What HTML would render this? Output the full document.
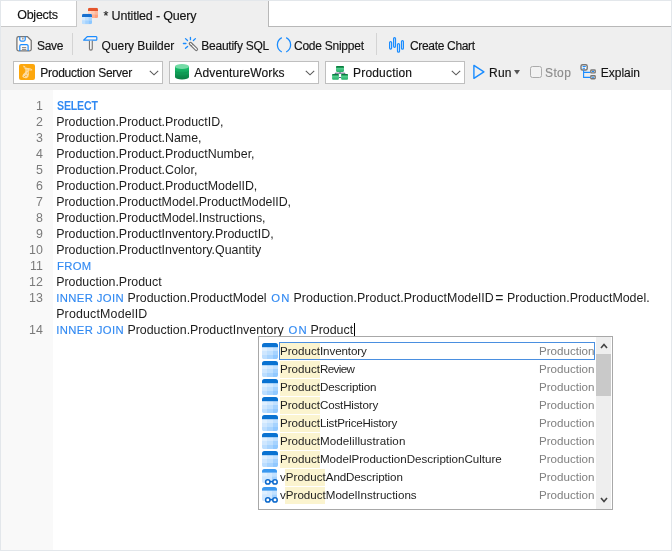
<!DOCTYPE html>
<html><head><meta charset="utf-8">
<style>
*{margin:0;padding:0;box-sizing:border-box}
html,body{width:672px;height:551px;overflow:hidden;background:#efefef;font-family:"Liberation Sans",sans-serif;color:#1e1e1e}
#root{position:absolute;left:0;top:0;width:672px;height:551px;will-change:transform;background:#efefef}
.a{position:absolute}
.tb{position:absolute;font-size:12px;letter-spacing:-0.25px;white-space:nowrap;line-height:14px;color:#141414;-webkit-text-stroke:0.15px currentColor}
.dd{position:absolute;top:61px;height:23px;background:#fff;border:1px solid #bfbfbf}
.chev{position:absolute;top:7.5px;width:10px;height:6px}
.code{position:absolute;font-size:12.4px;white-space:nowrap;line-height:16px;color:#1e1e1e}
.kw{color:#3089f2;font-size:11.3px;letter-spacing:0.25px;-webkit-text-stroke:0.12px #3089f2}
.kwb{font-weight:bold;font-size:12.3px;letter-spacing:-0.2px;-webkit-text-stroke:0;transform:scaleX(0.86);transform-origin:0 0}
.ln{position:absolute;font-size:12.4px;line-height:16px;color:#7a7a7a;text-align:right;width:30px;left:12.8px}
.pi{position:absolute;left:280px;font-size:11.6px;line-height:16px;white-space:nowrap;color:#1e1e1e}
.hl{background:#fbf4cf}
.ps{position:absolute;left:539px;font-size:11.6px;line-height:16px;color:#808080}
</style></head><body>
<div id="root">
<div class="a" style="left:0;top:0;width:672px;height:551px;border:1px solid #e3e7eb;z-index:50"></div>
<div class="a" style="left:1px;top:1px;width:76px;height:26px;background:#fff;border-right:1px solid #c8c8c8;border-bottom:1px solid #c8c8c8"></div>
<div class="tb" style="left:17.2px;top:8px;font-size:12.5px">Objects</div>
<svg class="a" style="left:80px;top:4px" width="24" height="24" viewBox="0 0 24 24">
<defs><clipPath id="oc"><rect x="8" y="3.8" width="10" height="10.2" rx="1.6"/></clipPath><clipPath id="bc"><rect x="2" y="9.8" width="10" height="10.4" rx="1.6"/></clipPath></defs>
<g clip-path="url(#oc)">
<rect x="8" y="3.8" width="10" height="10.2" fill="#ffc7b0"/>
<rect x="8" y="7" width="3.3" height="3.5" fill="#ffd9c8"/><rect x="11.3" y="7" width="3.4" height="3.5" fill="#ffcab4"/><rect x="14.7" y="7" width="3.3" height="3.5" fill="#ffb89a"/>
<rect x="8" y="10.5" width="3.3" height="3.5" fill="#ffc4ab"/><rect x="11.3" y="10.5" width="3.4" height="3.5" fill="#ffb092"/><rect x="14.7" y="10.5" width="3.3" height="3.5" fill="#ff9f7c"/>
<rect x="8" y="3.8" width="10" height="3.2" fill="#e4552c"/>
</g>
<g clip-path="url(#bc)">
<rect x="2" y="9.8" width="10" height="10.4" fill="#b8dcff"/>
<rect x="2" y="13" width="3.3" height="3.6" fill="#d6ecff"/><rect x="5.3" y="13" width="3.4" height="3.6" fill="#c2e2ff"/><rect x="8.7" y="13" width="3.3" height="3.6" fill="#a9d5ff"/>
<rect x="2" y="16.6" width="3.3" height="3.6" fill="#bcdfff"/><rect x="5.3" y="16.6" width="3.4" height="3.6" fill="#a3d2ff"/><rect x="8.7" y="16.6" width="3.3" height="3.6" fill="#8cc7ff"/>
<rect x="2" y="9.8" width="10" height="3.2" fill="#1670d0"/>
</g>
</svg>
<div class="tb" style="left:103.6px;top:9px;font-size:12.5px;letter-spacing:-0.17px">* Untitled - Query</div>
<div class="a" style="left:268px;top:1px;width:403px;height:26px;background:#fff;border-left:1px solid #b8b8b8;border-bottom:1px solid #b8b8b8"></div>
<svg class="a" style="left:16px;top:36px" width="16" height="16" viewBox="0 0 16 16">
<path d="M0.9 2.4 a1.8 1.8 0 0 1 1.8 -1.8 H11.4 L15.25 4.5 V13.1 a1.8 1.8 0 0 1 -1.8 1.8 H2.7 a1.8 1.8 0 0 1 -1.8 -1.8 Z" fill="#fffaf6" stroke="#777777" stroke-width="1.3"/>
<path d="M3.8 0.6 V3.6 a1.5 1.5 0 0 0 1.5 1.5 H7.7 a1.5 1.5 0 0 0 1.5 -1.5 V0.6" fill="none" stroke="#1a8cff" stroke-width="1.2"/>
<path d="M6.9 1.8 V3.5" stroke="#777777" stroke-width="1.1"/>
<path d="M3.8 15 V10.1 a1.5 1.5 0 0 1 1.5 -1.5 H10.6 a1.5 1.5 0 0 1 1.5 1.5 V15" fill="none" stroke="#1a8cff" stroke-width="1.2"/>
<path d="M6 11.6 H10.2 M6 13.4 H10.2" stroke="#777777" stroke-width="0.9"/>
</svg>
<div class="tb" style="left:36.9px;top:38.6px">Save</div>
<div class="a" style="left:72px;top:33px;width:1px;height:22px;background:#d4d4d4"></div>
<svg class="a" style="left:82px;top:36px" width="16" height="16" viewBox="0 0 16 16">
<path d="M1.6 4.1 L5.2 0.7 H14.2 a0.6 0.6 0 0 1 0.6 0.6 V3.5 a0.6 0.6 0 0 1 -0.6 0.6 Z" fill="#fff6f0" stroke="#1a8cff" stroke-width="1.2" stroke-linejoin="round"/>
<path d="M7.5 4.7 V12.8 a1.37 1.37 0 0 0 2.75 0 V4.7" fill="#fff" stroke="#777777" stroke-width="1.2"/>
</svg>
<div class="tb" style="left:101.6px;top:38.6px;letter-spacing:-0.05px">Query Builder</div>
<svg class="a" style="left:180px;top:32px" width="24" height="24" viewBox="0 0 24 24">
<path d="M10.45 5.3 V7.7 M5.5 6.6 L7.5 8.5 M15.4 6.6 L13.4 8.5 M3.4 11.5 H5.9 M5.5 16.3 L7.6 14.4" stroke="#1a8cff" stroke-width="1.3" stroke-linecap="round"/>
<path d="M10.5 11.6 L16.3 17.3" stroke="#777777" stroke-width="3.6" stroke-linecap="round"/>
<path d="M10.5 11.6 L16.3 17.3" stroke="#fff" stroke-width="1.2" stroke-linecap="round"/>
<path d="M11.2 14 L13 12.2" stroke="#777777" stroke-width="1"/>
</svg>
<div class="tb" style="left:201.3px;top:38.6px">Beautify SQL</div>
<svg class="a" style="left:272px;top:32px" width="24" height="24" viewBox="0 0 24 24">
<path d="M9.8 5.7 A8 8 0 0 0 9.8 20" fill="none" stroke="#1a8cff" stroke-width="1.3"/>
<path d="M14.2 5.7 A8 8 0 0 1 14.2 20" fill="none" stroke="#1a8cff" stroke-width="1.3"/>
</svg>
<div class="tb" style="left:294px;top:38.6px">Code Snippet</div>
<div class="a" style="left:376px;top:33px;width:1px;height:22px;background:#d4d4d4"></div>
<svg class="a" style="left:384px;top:32px" width="24" height="24" viewBox="0 0 24 24">
<g fill="none" stroke="#1a8cff" stroke-width="1.2">
<rect x="5.6" y="9.6" width="2" height="7.5" rx="1"/>
<rect x="9.6" y="5.6" width="1.9" height="9.7" rx="0.95"/>
<rect x="13.5" y="11.6" width="2" height="8.6" rx="1"/>
<rect x="17.5" y="8.6" width="1.9" height="8.5" rx="0.95"/>
</g></svg>
<div class="tb" style="left:410px;top:38.6px;letter-spacing:-0.33px">Create Chart</div>
<div class="dd" style="left:13px;width:150px"><svg class="chev" style="left:135px" viewBox="0 0 10 6"><path d="M0.8 0.8 L5 4.8 L9.2 0.8" fill="none" stroke="#5a5a5a" stroke-width="1.1"/></svg></div>
<svg class="a" style="left:19px;top:64px" width="16" height="16" viewBox="0 0 16 16">
<rect x="0" y="0" width="16" height="16" rx="2" fill="#fda70c"/>
<g fill="#fde4bb" opacity="0.85">
<path d="M4 1.8 Q5.5 1.5 6.8 3.2 Q7.5 4.2 9 4 Q12 3.8 13.6 6 Q12.5 6.8 10 6.4 Q9.4 8 10 10 Q10 13 7.5 14.2 Q4.5 14.5 3.2 12.6 Q3.5 10.2 6 8.6 Q6.6 7 6.4 5.4 Q4.6 3.8 4 1.8 Z"/>
</g>
<g fill="#fda70c">
<circle cx="7" cy="11.5" r="0.7"/><circle cx="5.5" cy="12.5" r="0.6"/><circle cx="8.5" cy="9" r="0.6"/><circle cx="8" cy="6" r="0.5"/><circle cx="11" cy="5.2" r="0.5"/><circle cx="6" cy="3.5" r="0.5"/>
</g></svg>
<div class="tb" style="left:40.3px;top:66px;letter-spacing:-0.26px">Production Server</div>
<div class="dd" style="left:169px;width:150px"><svg class="chev" style="left:135px" viewBox="0 0 10 6"><path d="M0.8 0.8 L5 4.8 L9.2 0.8" fill="none" stroke="#5a5a5a" stroke-width="1.1"/></svg></div>
<svg class="a" style="left:175px;top:64px" width="14" height="16" viewBox="0 0 14 16">
<defs><linearGradient id="dbg" x1="0" y1="0" x2="0" y2="1"><stop offset="0" stop-color="#19c46e"/><stop offset="1" stop-color="#0a7a40"/></linearGradient></defs>
<path d="M0 2.6 V13 a7 2.6 0 0 0 14 0 V2.6z" fill="url(#dbg)"/>
<path d="M0 6.6 a7 2.4 0 0 0 14 0 M0 10 a7 2.4 0 0 0 14 0" fill="none" stroke="#0c8a4a" stroke-width="0.6" opacity="0.7"/>
<ellipse cx="7" cy="2.6" rx="7" ry="2.5" fill="#74dba6"/>
</svg>
<div class="tb" style="left:194.3px;top:66px;letter-spacing:0.14px">AdventureWorks</div>
<div class="dd" style="left:325px;width:140px"><svg class="chev" style="left:125px" viewBox="0 0 10 6"><path d="M0.8 0.8 L5 4.8 L9.2 0.8" fill="none" stroke="#5a5a5a" stroke-width="1.1"/></svg></div>
<svg class="a" style="left:332px;top:66px" width="16" height="14" viewBox="0 0 16 14">
<defs><linearGradient id="sg" x1="0" y1="0" x2="0" y2="1"><stop offset="0" stop-color="#6fe0a8"/><stop offset="1" stop-color="#26b068"/></linearGradient></defs>
<path d="M8 5.6 V7.2 M3.2 7.2 H12.8 M3.2 7.2 V8 M12.8 7.2 V8 M6.8 11.5 H9.2" stroke="#3d4b6b" stroke-width="0.9" fill="none"/>
<rect x="4" y="0.1" width="8" height="5.8" rx="1.1" fill="url(#sg)"/>
<path d="M4 1.8 V1.2 a1.1 1.1 0 0 1 1.1 -1.1 h5.8 a1.1 1.1 0 0 1 1.1 1.1 V1.8z" fill="#0a7d3e"/>
<rect x="0.1" y="7.9" width="6.8" height="5.9" rx="1.1" fill="url(#sg)"/>
<path d="M0.1 9.6 V9 a1.1 1.1 0 0 1 1.1 -1.1 h4.6 a1.1 1.1 0 0 1 1.1 1.1 V9.6z" fill="#0a7d3e"/>
<rect x="9.1" y="7.9" width="6.9" height="5.9" rx="1.1" fill="url(#sg)"/>
<path d="M9.1 9.6 V9 a1.1 1.1 0 0 1 1.1 -1.1 h4.7 a1.1 1.1 0 0 1 1.1 1.1 V9.6z" fill="#0a7d3e"/>
</svg>
<div class="tb" style="left:353.1px;top:66px;letter-spacing:0.17px">Production</div>
<svg class="a" style="left:468px;top:60px" width="24" height="24" viewBox="0 0 24 24"><path d="M5.9 5.4 L15.9 11.8 L5.9 18.3 Z" fill="none" stroke="#1a8cff" stroke-width="1.4" stroke-linejoin="round"/></svg>
<div class="tb" style="left:489.1px;top:66px;letter-spacing:0.2px">Run</div>
<svg class="a" style="left:514px;top:70px" width="6" height="5" viewBox="0 0 6 5"><path d="M0 0 H6 L3 4.5z" fill="#555"/></svg>
<div class="a" style="left:530px;top:66px;width:12px;height:12px;border:1.3px solid #ababab;border-radius:2.5px;background:#f2f2f2"></div>
<div class="tb" style="left:545px;top:66px;color:#8c8c8c;letter-spacing:0.38px">Stop</div>
<svg class="a" style="left:576px;top:60px" width="24" height="24" viewBox="0 0 24 24">
<g fill="#fffaf6" stroke="#777777" stroke-width="1.4">
<rect x="5" y="4.7" width="6.2" height="5.3" rx="1.5"/>
<rect x="14.8" y="10" width="4.4" height="2.9" rx="0.7"/>
<rect x="14.8" y="15.8" width="4.4" height="3" rx="0.7"/>
</g>
<path d="M6.6 6.5 H9.8 M6.6 8.3 H9" stroke="#1a8cff" stroke-width="1"/>
<path d="M16 11.5 H18 M16 17.3 H18" stroke="#1a8cff" stroke-width="1"/>
<path d="M7.6 10.2 V17.4 H14.2 M7.6 12.4 H14.2" fill="none" stroke="#1a8cff" stroke-width="1.1"/>
</svg>
<div class="tb" style="left:600.8px;top:66px;letter-spacing:-0.02px">Explain</div>
<div class="a" style="left:1px;top:90px;width:670px;height:460px;background:#fff"></div>
<div class="a" style="left:1px;top:90px;width:52px;height:460px;background:#f9f9f9"></div>
<div class="ln" style="top:98px">1</div>
<div class="ln" style="top:114px">2</div>
<div class="ln" style="top:130px">3</div>
<div class="ln" style="top:146px">4</div>
<div class="ln" style="top:162px">5</div>
<div class="ln" style="top:178px">6</div>
<div class="ln" style="top:194px">7</div>
<div class="ln" style="top:210px">8</div>
<div class="ln" style="top:226px">9</div>
<div class="ln" style="top:242px">10</div>
<div class="ln" style="top:258px">11</div>
<div class="ln" style="top:274px">12</div>
<div class="ln" style="top:290px">13</div>
<div class="ln" style="top:322px">14</div>
<div class="code kw kwb" style="left:56.6px;top:98px;">SELECT</div>
<div class="code" style="left:56.2px;top:114px;">Production.Product.ProductID,</div>
<div class="code" style="left:56.2px;top:130px;">Production.Product.Name,</div>
<div class="code" style="left:56.2px;top:146px;">Production.Product.ProductNumber,</div>
<div class="code" style="left:56.2px;top:162px;">Production.Product.Color,</div>
<div class="code" style="left:56.2px;top:178px;">Production.Product.ProductModelID,</div>
<div class="code" style="left:56.2px;top:194px;">Production.ProductModel.ProductModelID,</div>
<div class="code" style="left:56.2px;top:210px;">Production.ProductModel.Instructions,</div>
<div class="code" style="left:56.2px;top:226px;">Production.ProductInventory.ProductID,</div>
<div class="code" style="left:56.2px;top:242px;">Production.ProductInventory.Quantity</div>
<div class="code kw" style="left:57px;top:258px;letter-spacing:0.3px">FROM</div>
<div class="code" style="left:56.2px;top:274px;">Production.Product</div>
<div class="code kw" style="left:56.2px;top:290px;letter-spacing:0.38px">INNER JOIN</div>
<div class="code" style="left:127.4px;top:290px;">Production.ProductModel</div>
<div class="code kw" style="left:271.2px;top:290px;letter-spacing:1.2px">ON</div>
<div class="code" style="left:293.4px;top:290px;letter-spacing:0.08px">Production.Product.ProductModelID</div>
<div class="code" style="left:495.2px;top:289.5px;font-size:14px">=</div>
<div class="code" style="left:507px;top:290px;">Production.ProductModel.</div>
<div class="code" style="left:56.2px;top:306px;letter-spacing:0.17px">ProductModelID</div>
<div class="code kw" style="left:56.2px;top:322px;letter-spacing:0.38px">INNER JOIN</div>
<div class="code" style="left:127.4px;top:322px;">Production.ProductInventory</div>
<div class="code kw" style="left:288.4px;top:322px;letter-spacing:1.2px">ON</div>
<div class="code" style="left:310.4px;top:322px;">Product</div>
<div class="a" style="left:354px;top:323px;width:1px;height:13px;background:#000"></div>
<div class="a" style="left:258px;top:336px;width:355px;height:174px;background:#fff;border:1px solid #a8a8a8"></div>
<div class="a" style="left:596px;top:337px;width:15px;height:172px;background:#eeeeee"></div>
<div class="a" style="left:596px;top:354px;width:15px;height:42px;background:#c9c9c9"></div>
<svg class="a" style="left:600px;top:343px" width="8" height="6" viewBox="0 0 8 6"><path d="M1 5 L4 1.5 L7 5" fill="none" stroke="#444" stroke-width="1.6"/></svg>
<svg class="a" style="left:600px;top:497px" width="8" height="6" viewBox="0 0 8 6"><path d="M1 1 L4 4.5 L7 1" fill="none" stroke="#444" stroke-width="1.6"/></svg>
<svg class="a" style="left:262px;top:343px" width="16" height="16" viewBox="0 0 16 16"><defs><clipPath id="tc0"><rect x="0" y="0" width="16" height="16" rx="2.6"/></clipPath></defs>
<g clip-path="url(#tc0)">
<rect x="0" y="0" width="16" height="16" fill="#cfe7ff"/>
<rect x="0" y="4" width="5" height="4" fill="#e0f0ff"/><rect x="5" y="4" width="6" height="4" fill="#d3e9ff"/><rect x="11" y="4" width="5" height="4" fill="#c2e1ff"/>
<rect x="0" y="8" width="5" height="4" fill="#cfe7ff"/><rect x="5" y="8" width="6" height="4" fill="#bfe0ff"/><rect x="11" y="8" width="5" height="4" fill="#a6d3ff"/>
<rect x="0" y="12" width="5" height="4" fill="#bcdeff"/><rect x="5" y="12" width="6" height="4" fill="#a8d4ff"/><rect x="11" y="12" width="5" height="4" fill="#92c9ff"/>
<rect x="0" y="0" width="16" height="4.2" fill="#0a72d1"/>
</g></svg>
<div class="a" style="left:280px;top:343px;width:40px;height:16.5px;background:#fbf4cf"></div>
<div class="pi" style="top:343px">Product<span style="letter-spacing:-0.1px">Inventory</span></div>
<div class="ps" style="top:343px">Production</div>
<svg class="a" style="left:262px;top:361px" width="16" height="16" viewBox="0 0 16 16"><defs><clipPath id="tc1"><rect x="0" y="0" width="16" height="16" rx="2.6"/></clipPath></defs>
<g clip-path="url(#tc1)">
<rect x="0" y="0" width="16" height="16" fill="#cfe7ff"/>
<rect x="0" y="4" width="5" height="4" fill="#e0f0ff"/><rect x="5" y="4" width="6" height="4" fill="#d3e9ff"/><rect x="11" y="4" width="5" height="4" fill="#c2e1ff"/>
<rect x="0" y="8" width="5" height="4" fill="#cfe7ff"/><rect x="5" y="8" width="6" height="4" fill="#bfe0ff"/><rect x="11" y="8" width="5" height="4" fill="#a6d3ff"/>
<rect x="0" y="12" width="5" height="4" fill="#bcdeff"/><rect x="5" y="12" width="6" height="4" fill="#a8d4ff"/><rect x="11" y="12" width="5" height="4" fill="#92c9ff"/>
<rect x="0" y="0" width="16" height="4.2" fill="#0a72d1"/>
</g></svg>
<div class="a" style="left:280px;top:361px;width:40px;height:16.5px;background:#fbf4cf"></div>
<div class="pi" style="top:361px">Product<span style="letter-spacing:-0.6px">Review</span></div>
<div class="ps" style="top:361px">Production</div>
<svg class="a" style="left:262px;top:379px" width="16" height="16" viewBox="0 0 16 16"><defs><clipPath id="tc2"><rect x="0" y="0" width="16" height="16" rx="2.6"/></clipPath></defs>
<g clip-path="url(#tc2)">
<rect x="0" y="0" width="16" height="16" fill="#cfe7ff"/>
<rect x="0" y="4" width="5" height="4" fill="#e0f0ff"/><rect x="5" y="4" width="6" height="4" fill="#d3e9ff"/><rect x="11" y="4" width="5" height="4" fill="#c2e1ff"/>
<rect x="0" y="8" width="5" height="4" fill="#cfe7ff"/><rect x="5" y="8" width="6" height="4" fill="#bfe0ff"/><rect x="11" y="8" width="5" height="4" fill="#a6d3ff"/>
<rect x="0" y="12" width="5" height="4" fill="#bcdeff"/><rect x="5" y="12" width="6" height="4" fill="#a8d4ff"/><rect x="11" y="12" width="5" height="4" fill="#92c9ff"/>
<rect x="0" y="0" width="16" height="4.2" fill="#0a72d1"/>
</g></svg>
<div class="a" style="left:280px;top:379px;width:40px;height:16.5px;background:#fbf4cf"></div>
<div class="pi" style="top:379px">Product<span style="letter-spacing:-0.14px">Description</span></div>
<div class="ps" style="top:379px">Production</div>
<svg class="a" style="left:262px;top:397px" width="16" height="16" viewBox="0 0 16 16"><defs><clipPath id="tc3"><rect x="0" y="0" width="16" height="16" rx="2.6"/></clipPath></defs>
<g clip-path="url(#tc3)">
<rect x="0" y="0" width="16" height="16" fill="#cfe7ff"/>
<rect x="0" y="4" width="5" height="4" fill="#e0f0ff"/><rect x="5" y="4" width="6" height="4" fill="#d3e9ff"/><rect x="11" y="4" width="5" height="4" fill="#c2e1ff"/>
<rect x="0" y="8" width="5" height="4" fill="#cfe7ff"/><rect x="5" y="8" width="6" height="4" fill="#bfe0ff"/><rect x="11" y="8" width="5" height="4" fill="#a6d3ff"/>
<rect x="0" y="12" width="5" height="4" fill="#bcdeff"/><rect x="5" y="12" width="6" height="4" fill="#a8d4ff"/><rect x="11" y="12" width="5" height="4" fill="#92c9ff"/>
<rect x="0" y="0" width="16" height="4.2" fill="#0a72d1"/>
</g></svg>
<div class="a" style="left:280px;top:397px;width:40px;height:16.5px;background:#fbf4cf"></div>
<div class="pi" style="top:397px">Product<span style="letter-spacing:-0.17px">CostHistory</span></div>
<div class="ps" style="top:397px">Production</div>
<svg class="a" style="left:262px;top:415px" width="16" height="16" viewBox="0 0 16 16"><defs><clipPath id="tc4"><rect x="0" y="0" width="16" height="16" rx="2.6"/></clipPath></defs>
<g clip-path="url(#tc4)">
<rect x="0" y="0" width="16" height="16" fill="#cfe7ff"/>
<rect x="0" y="4" width="5" height="4" fill="#e0f0ff"/><rect x="5" y="4" width="6" height="4" fill="#d3e9ff"/><rect x="11" y="4" width="5" height="4" fill="#c2e1ff"/>
<rect x="0" y="8" width="5" height="4" fill="#cfe7ff"/><rect x="5" y="8" width="6" height="4" fill="#bfe0ff"/><rect x="11" y="8" width="5" height="4" fill="#a6d3ff"/>
<rect x="0" y="12" width="5" height="4" fill="#bcdeff"/><rect x="5" y="12" width="6" height="4" fill="#a8d4ff"/><rect x="11" y="12" width="5" height="4" fill="#92c9ff"/>
<rect x="0" y="0" width="16" height="4.2" fill="#0a72d1"/>
</g></svg>
<div class="a" style="left:280px;top:415px;width:40px;height:16.5px;background:#fbf4cf"></div>
<div class="pi" style="top:415px">Product<span style="letter-spacing:-0.22px">ListPriceHistory</span></div>
<div class="ps" style="top:415px">Production</div>
<svg class="a" style="left:262px;top:433px" width="16" height="16" viewBox="0 0 16 16"><defs><clipPath id="tc5"><rect x="0" y="0" width="16" height="16" rx="2.6"/></clipPath></defs>
<g clip-path="url(#tc5)">
<rect x="0" y="0" width="16" height="16" fill="#cfe7ff"/>
<rect x="0" y="4" width="5" height="4" fill="#e0f0ff"/><rect x="5" y="4" width="6" height="4" fill="#d3e9ff"/><rect x="11" y="4" width="5" height="4" fill="#c2e1ff"/>
<rect x="0" y="8" width="5" height="4" fill="#cfe7ff"/><rect x="5" y="8" width="6" height="4" fill="#bfe0ff"/><rect x="11" y="8" width="5" height="4" fill="#a6d3ff"/>
<rect x="0" y="12" width="5" height="4" fill="#bcdeff"/><rect x="5" y="12" width="6" height="4" fill="#a8d4ff"/><rect x="11" y="12" width="5" height="4" fill="#92c9ff"/>
<rect x="0" y="0" width="16" height="4.2" fill="#0a72d1"/>
</g></svg>
<div class="a" style="left:280px;top:433px;width:40px;height:16.5px;background:#fbf4cf"></div>
<div class="pi" style="top:433px">Product<span style="letter-spacing:0.1px">Modelillustration</span></div>
<div class="ps" style="top:433px">Production</div>
<svg class="a" style="left:262px;top:451px" width="16" height="16" viewBox="0 0 16 16"><defs><clipPath id="tc6"><rect x="0" y="0" width="16" height="16" rx="2.6"/></clipPath></defs>
<g clip-path="url(#tc6)">
<rect x="0" y="0" width="16" height="16" fill="#cfe7ff"/>
<rect x="0" y="4" width="5" height="4" fill="#e0f0ff"/><rect x="5" y="4" width="6" height="4" fill="#d3e9ff"/><rect x="11" y="4" width="5" height="4" fill="#c2e1ff"/>
<rect x="0" y="8" width="5" height="4" fill="#cfe7ff"/><rect x="5" y="8" width="6" height="4" fill="#bfe0ff"/><rect x="11" y="8" width="5" height="4" fill="#a6d3ff"/>
<rect x="0" y="12" width="5" height="4" fill="#bcdeff"/><rect x="5" y="12" width="6" height="4" fill="#a8d4ff"/><rect x="11" y="12" width="5" height="4" fill="#92c9ff"/>
<rect x="0" y="0" width="16" height="4.2" fill="#0a72d1"/>
</g></svg>
<div class="a" style="left:280px;top:451px;width:40px;height:16.5px;background:#fbf4cf"></div>
<div class="pi" style="top:451px">Product<span style="letter-spacing:-0.02px">ModelProductionDescriptionCulture</span></div>
<div class="ps" style="top:451px">Production</div>
<svg class="a" style="left:262px;top:469px" width="16" height="16" viewBox="0 0 16 16"><defs><clipPath id="vc7"><rect x="0" y="0" width="15" height="14" rx="2.6"/></clipPath></defs>
<g clip-path="url(#vc7)">
<rect x="0" y="0" width="15" height="14" fill="#cfe7ff"/>
<rect x="0" y="3.6" width="5" height="4" fill="#e0f0ff"/><rect x="5" y="3.6" width="5" height="4" fill="#d3e9ff"/><rect x="10" y="3.6" width="5" height="4" fill="#c2e1ff"/>
<rect x="0" y="7.6" width="5" height="7" fill="#cfe7ff"/><rect x="10" y="7.6" width="5" height="7" fill="#a6d3ff"/>
<rect x="0" y="0" width="15" height="3.6" fill="#3a98f0"/>
</g>
<circle cx="5.8" cy="12.9" r="2.2" fill="#fff" stroke="#0a68cc" stroke-width="1.5"/>
<circle cx="13" cy="12.9" r="2.2" fill="#fff" stroke="#0a68cc" stroke-width="1.5"/>
<path d="M8 12.6 H10.8" stroke="#0a68cc" stroke-width="1.4"/></svg>
<div class="a" style="left:284.8px;top:469px;width:40px;height:16.5px;background:#fbf4cf"></div>
<div class="pi" style="top:469px">vProduct<span style="letter-spacing:-0.12px">AndDescription</span></div>
<div class="ps" style="top:469px">Production</div>
<svg class="a" style="left:262px;top:487px" width="16" height="16" viewBox="0 0 16 16"><defs><clipPath id="vc8"><rect x="0" y="0" width="15" height="14" rx="2.6"/></clipPath></defs>
<g clip-path="url(#vc8)">
<rect x="0" y="0" width="15" height="14" fill="#cfe7ff"/>
<rect x="0" y="3.6" width="5" height="4" fill="#e0f0ff"/><rect x="5" y="3.6" width="5" height="4" fill="#d3e9ff"/><rect x="10" y="3.6" width="5" height="4" fill="#c2e1ff"/>
<rect x="0" y="7.6" width="5" height="7" fill="#cfe7ff"/><rect x="10" y="7.6" width="5" height="7" fill="#a6d3ff"/>
<rect x="0" y="0" width="15" height="3.6" fill="#3a98f0"/>
</g>
<circle cx="5.8" cy="12.9" r="2.2" fill="#fff" stroke="#0a68cc" stroke-width="1.5"/>
<circle cx="13" cy="12.9" r="2.2" fill="#fff" stroke="#0a68cc" stroke-width="1.5"/>
<path d="M8 12.6 H10.8" stroke="#0a68cc" stroke-width="1.4"/></svg>
<div class="a" style="left:284.8px;top:487px;width:40px;height:16.5px;background:#fbf4cf"></div>
<div class="pi" style="top:487px">vProduct<span style="letter-spacing:0px">ModelInstructions</span></div>
<div class="ps" style="top:487px">Production</div>
<div class="a" style="left:279px;top:342px;width:316px;height:18px;border:1px solid #4a8fe0"></div>
</div>
</body></html>
